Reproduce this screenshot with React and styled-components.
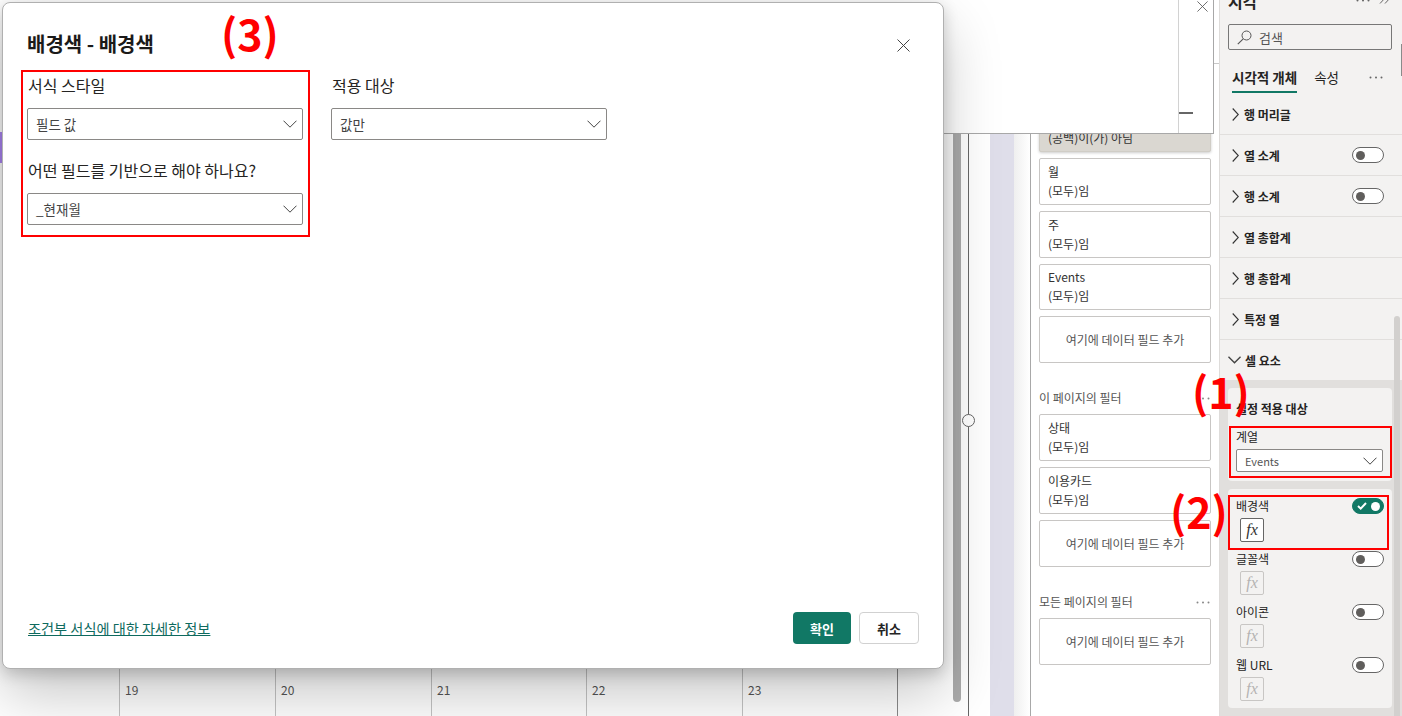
import React from "react";
import styled, { createGlobalStyle } from "styled-components";

const GlobalStyle = createGlobalStyle`
  html, body {
    margin: 0;
    padding: 0;
    background: #fff;
  }
  * {
    box-sizing: border-box;
  }
`;

const FONT = `"Noto Sans CJK KR", "Noto Sans", sans-serif`;

const calendarDays = [19, 20, 21, 22, 23];
const pageFilters = [
  { name: "상태", value: "(모두)임" },
  { name: "이용카드", value: "(모두)임" },
];
const closedRows = [
  { label: "행 머리글" },
  { label: "열 소계", toggle: true },
  { label: "행 소계", toggle: true },
  { label: "열 총합계" },
  { label: "행 총합계" },
  { label: "특정 열" },
];
const cellOptions = [
  { label: "배경색", on: true },
  { label: "글꼴색" },
  { label: "아이콘" },
  { label: "웹 URL" },
];

function ChevronDown({ size = 14, weight = 1 }) {
  return (
    <svg width={size} height={size / 2 + 1} viewBox="0 0 14 8" fill="none">
      <path d="M0.5 0.7 L7 7.2 L13.5 0.7" stroke="#444" strokeWidth={weight} />
    </svg>
  );
}

function ChevronRight() {
  return (
    <svg width="7" height="13" viewBox="0 0 7 13" fill="none">
      <path d="M0.7 0.5 L6.3 6.5 L0.7 12.5" stroke="#333" strokeWidth="1.1" />
    </svg>
  );
}

function Dots({ color = "#666" }) {
  return (
    <svg width="14" height="3" viewBox="0 0 14 3" fill={color}>
      <circle cx="1.5" cy="1.5" r="1" />
      <circle cx="7" cy="1.5" r="1" />
      <circle cx="12.5" cy="1.5" r="1" />
    </svg>
  );
}

function CloseIcon({ size = 13, color = "#444" }) {
  return (
    <svg width={size} height={size} viewBox="0 0 13 13" fill="none">
      <path d="M0.5 0.5 L12.5 12.5 M12.5 0.5 L0.5 12.5" stroke={color} strokeWidth="1" />
    </svg>
  );
}

function SearchIcon() {
  return (
    <svg width="15" height="15" viewBox="0 0 15 15" fill="none">
      <circle cx="9.5" cy="5.5" r="4.5" stroke="#555" strokeWidth="1" />
      <path d="M6.2 8.8 L0.8 14.2" stroke="#555" strokeWidth="1.1" />
    </svg>
  );
}

function Toggle({ on }) {
  return (
    <ToggleTrack $on={on}>
      {on && (
        <svg width="10" height="8" viewBox="0 0 10 8" fill="none">
          <path d="M1 4 L3.7 6.6 L9 1" stroke="#fff" strokeWidth="2" />
        </svg>
      )}
      <ToggleDot $on={on} />
    </ToggleTrack>
  );
}

function Select({ children }) {
  return (
    <DialogSelect>
      {children}
      <ChevronDown />
    </DialogSelect>
  );
}

export default function App() {
  return (
    <Page>
      <GlobalStyle />

      <Canvas>
        <Report>
          <PurpleMark />
          <CalendarRow>
            {calendarDays.map((day) => (
              <CalendarCell key={day}>{day}</CalendarCell>
            ))}
          </CalendarRow>
        </Report>
        <ScrollThumb />
        <SliderLine>
          <SliderKnob />
        </SliderLine>
        <LavenderBand />
        <FadeBand />
      </Canvas>

      <FilterPane>
        <FilterHeader />
        <ActiveCard>
          <span>일</span>
          <span>(공백)이(가) 아님</span>
        </ActiveCard>
        <FilterCard>
          <span>월</span>
          <span>(모두)임</span>
        </FilterCard>
        <FilterCard>
          <span>주</span>
          <span>(모두)임</span>
        </FilterCard>
        <FilterCard $short>
          <span>Events</span>
          <span>(모두)임</span>
        </FilterCard>
        <AddCard>여기에 데이터 필드 추가</AddCard>

        <FilterHeading>
          이 페이지의 필터
          <Dots color="#888" />
        </FilterHeading>
        {pageFilters.map((filter) => (
          <FilterCard key={filter.name}>
            <span>{filter.name}</span>
            <span>{filter.value}</span>
          </FilterCard>
        ))}
        <AddCard>여기에 데이터 필드 추가</AddCard>

        <FilterHeading>
          모든 페이지의 필터
          <Dots color="#888" />
        </FilterHeading>
        <AddCard>여기에 데이터 필드 추가</AddCard>
      </FilterPane>

      <FormatPane>
        <PaneHeader>
          <PaneTitle>시각</PaneTitle>
          <PaneHeaderTools>
            <Dots />
            <svg width="13" height="8" viewBox="0 0 13 8" fill="none">
              <path d="M1 7.5 L7 1 M6 7.5 L12 1" stroke="#666" strokeWidth="1" />
            </svg>
          </PaneHeaderTools>
        </PaneHeader>
        <SearchBox>
          <SearchIcon />
          검색
        </SearchBox>
        <Tabs>
          <Tab $active>시각적 개체</Tab>
          <Tab>속성</Tab>
          <TabDots>
            <Dots />
          </TabDots>
        </Tabs>
        {closedRows.map((row) => (
          <SectionRow key={row.label}>
            <ChevronRight />
            <SectionLabel>{row.label}</SectionLabel>
            {row.toggle && <Toggle />}
          </SectionRow>
        ))}
        <OpenSectionRow>
          <ChevronDown size={13} weight={1.5} />
          <SectionLabel>셀 요소</SectionLabel>
        </OpenSectionRow>
        <GrayArea>
          <ApplyCard>
            <ApplyTitle>설정 적용 대상</ApplyTitle>
            <ApplyLabel>계열</ApplyLabel>
            <PaneSelect>
              Events
              <ChevronDown />
            </PaneSelect>
          </ApplyCard>
          <OptionsCard>
            {cellOptions.map((option) => (
              <Option key={option.label}>
                <OptionHead>
                  <OptionLabel>{option.label}</OptionLabel>
                  <Toggle on={option.on} />
                </OptionHead>
                <FxBox $on={option.on}>fx</FxBox>
              </Option>
            ))}
          </OptionsCard>
        </GrayArea>
        <PaneScrollThumb />
        <EdgeThumb />
      </FormatPane>

      <Popup>
        <PopupDivider />
        <PopupClose>
          <CloseIcon size={11} color="#555" />
        </PopupClose>
        <PopupMinus />
      </Popup>

      <Dialog>
        <DialogHead>
          <DialogTitle>배경색 - 배경색</DialogTitle>
          <DialogClose>
            <CloseIcon />
          </DialogClose>
        </DialogHead>
        <DialogForm>
          <FormColumn>
            <FieldLabel>서식 스타일</FieldLabel>
            <Select>필드 값</Select>
            <FieldLabel $second>어떤 필드를 기반으로 해야 하나요?</FieldLabel>
            <Select>_현재월</Select>
          </FormColumn>
          <FormColumn>
            <FieldLabel>적용 대상</FieldLabel>
            <Select>값만</Select>
          </FormColumn>
        </DialogForm>
        <DialogFoot>
          <HelpLink>조건부 서식에 대한 자세한 정보</HelpLink>
          <FootButtons>
            <PrimaryButton>확인</PrimaryButton>
            <SecondaryButton>취소</SecondaryButton>
          </FootButtons>
        </DialogFoot>
      </Dialog>

      <RedBox $x={21} $y={70} $w={289} $h={167} />
      <RedBox $x={1229} $y={426} $w={163} $h={52} />
      <RedBox $x={1228} $y={495} $w={161} $h={55} />
      <RedNumber $x={221} $y={7}>(3)</RedNumber>
      <RedNumber $x={1192} $y={365}>(1)</RedNumber>
      <RedNumber $x={1170} $y={485}>(2)</RedNumber>
    </Page>
  );
}

const Page = styled.div`
  position: relative;
  display: flex;
  width: 1402px;
  height: 716px;
  overflow: hidden;
  background: #fff;
  font-family: ${FONT};
  color: #252423;
`;

const Canvas = styled.div`
  display: flex;
  flex: 0 0 1030px;
`;

const Report = styled.div`
  display: flex;
  flex: 0 0 898px;
  flex-direction: column;
  justify-content: space-between;
  border-right: 1px solid #8a8a8a;
`;

const PurpleMark = styled.div`
  width: 3px;
  height: 31px;
  margin-top: 132px;
  background: #ab84f2;
`;

const CalendarRow = styled.div`
  display: grid;
  grid-template-columns: 156px 156px 155px 156px 155px;
  height: 48px;
  padding-left: 119px;
`;

const CalendarCell = styled.div`
  padding: 14px 0 0 5px;
  border-left: 1px solid #c4c4c4;
  font-size: 12px;
  line-height: 16px;
  color: #555;
`;

const ScrollThumb = styled.div`
  flex: 0 0 8px;
  margin: 0 0 14px 55px;
  border-radius: 0 0 4px 4px;
  background: #ababab;
`;

const SliderLine = styled.div`
  position: relative;
  flex: 0 0 1px;
  margin-left: 7px;
  background: #666;
`;

const SliderKnob = styled.div`
  position: absolute;
  top: 414px;
  left: -6px;
  width: 13px;
  height: 13px;
  border: 1px solid #666;
  border-radius: 50%;
  background: #fff;
`;

const LavenderBand = styled.div`
  flex: 0 0 24px;
  margin-left: 21px;
  background: #dfdeea;
`;

const FadeBand = styled.div`
  flex: 0 0 16px;
  background: linear-gradient(90deg, #efefef, #fff);
`;

const FilterPane = styled.div`
  display: flex;
  flex: 0 0 189px;
  flex-direction: column;
  align-items: flex-start;
  gap: 6px;
  padding-left: 8px;
  border-left: 1px solid #a8a8a8;
`;

const FilterHeader = styled.div`
  width: 189px;
  height: 64px;
  margin: 0 0 35px -9px;
  border-bottom: 1px solid #c8c8c8;
`;

const FilterCard = styled.div`
  display: flex;
  flex-direction: column;
  justify-content: center;
  flex: 0 0 auto;
  width: 172px;
  height: ${(p) => (p.$short ? "46px" : "47px")};
  padding: 0 0 2px 8px;
  border: 1px solid #c8c6c4;
  border-radius: 2px;
  background: #fff;
  font-size: 12px;
  line-height: 19px;
  color: #333;
`;

const ActiveCard = styled(FilterCard)`
  border-color: #d0cdc6;
  background: #dad7d1;
  box-shadow: 0 1px 3px rgba(0, 0, 0, 0.2);
`;

const AddCard = styled.div`
  display: flex;
  align-items: center;
  justify-content: center;
  flex: 0 0 47px;
  width: 172px;
  border: 1px solid #c8c6c4;
  border-radius: 2px;
  font-size: 12px;
  color: #555;
`;

const FilterHeading = styled.div`
  display: flex;
  align-items: center;
  justify-content: space-between;
  width: 172px;
  height: 18px;
  margin: 20px 0 1px;
  padding-right: 1px;
  font-size: 12px;
  line-height: 18px;
  color: #555;
`;

const FormatPane = styled.div`
  position: relative;
  display: flex;
  flex: 0 0 183px;
  flex-direction: column;
  border-left: 1px solid #dedcda;
  background: #f3f2f1;
`;

const PaneHeader = styled.div`
  display: flex;
  align-items: center;
  justify-content: space-between;
  height: 24px;
  padding: 0 10px 0 8px;
  overflow: hidden;
`;

const PaneTitle = styled.div`
  margin-top: -22px;
  font-size: 16px;
  font-weight: 700;
  line-height: 20px;
`;

const PaneHeaderTools = styled.div`
  display: flex;
  align-items: center;
  gap: 9px;
  margin-top: -24px;
`;

const SearchBox = styled.div`
  display: flex;
  align-items: center;
  gap: 7px;
  height: 26px;
  margin: 0 10px 0 8px;
  padding-left: 8px;
  border: 1px solid #777;
  border-radius: 2px;
  font-size: 13px;
  color: #555;
`;

const Tabs = styled.div`
  display: flex;
  height: 26px;
  margin: 17px 0 1px;
  padding-left: 12px;
`;

const Tab = styled.div`
  height: 26px;
  margin-right: 17px;
  border-bottom: 2px solid ${(p) => (p.$active ? "#117865" : "transparent")};
  font-size: 13.5px;
  font-weight: ${(p) => (p.$active ? 700 : 400)};
  line-height: 20px;
  color: #252423;
`;

const TabDots = styled.div`
  display: flex;
  align-items: center;
  height: 20px;
  margin-left: 13px;
`;

const SectionRow = styled.div`
  display: flex;
  flex: 0 0 41px;
  align-items: center;
  gap: 5px;
  padding: 0 18px 0 12px;
  border-bottom: 1px solid #e1dfdd;
`;

const OpenSectionRow = styled(SectionRow)`
  flex-basis: 40px;
  gap: 4px;
  padding-left: 8px;
  border-bottom: none;
`;

const SectionLabel = styled.div`
  flex: 1;
  font-size: 12px;
  font-weight: 700;
  color: #252423;
`;

const ToggleTrack = styled.div`
  display: flex;
  align-items: center;
  justify-content: ${(p) => (p.$on ? "space-between" : "flex-start")};
  width: 32px;
  height: 16px;
  padding: 0 3px 0 ${(p) => (p.$on ? "4px" : "3px")};
  border: 1px solid ${(p) => (p.$on ? "#117865" : "#666")};
  border-radius: 8px;
  background: ${(p) => (p.$on ? "#117865" : "#fff")};
`;

const ToggleDot = styled.div`
  width: 9px;
  height: 9px;
  border-radius: 50%;
  background: ${(p) => (p.$on ? "#fff" : "#605e5c")};
`;

const GrayArea = styled.div`
  display: flex;
  flex: 1;
  flex-direction: column;
  gap: 8px;
  padding: 8px 10px 8px 8px;
  background: #e1dfdd;
`;

const ApplyCard = styled.div`
  padding: 12px 9px 9px 8px;
  border-radius: 4px;
  background: #f3f2f1;
`;

const ApplyTitle = styled.div`
  font-size: 12px;
  font-weight: 700;
  line-height: 18px;
`;

const ApplyLabel = styled.div`
  margin-top: 10px;
  font-size: 12px;
  line-height: 18px;
`;

const PaneSelect = styled.div`
  display: flex;
  align-items: center;
  justify-content: space-between;
  height: 23px;
  margin-top: 3px;
  padding: 0 5px 0 8px;
  border: 1px solid #8a8886;
  border-radius: 2px;
  background: #fff;
  font-size: 11px;
  color: #555;
`;

const OptionsCard = styled.div`
  display: flex;
  flex-direction: column;
  gap: 9px;
  height: 219px;
  padding: 9px 8px 0;
  border-radius: 4px;
  background: #f3f2f1;
`;

const Option = styled.div`
  display: flex;
  flex-direction: column;
  gap: 4px;
`;

const OptionHead = styled.div`
  display: flex;
  align-items: center;
  justify-content: space-between;
  height: 16px;
`;

const OptionLabel = styled.span`
  margin-top: -2px;
  font-size: 12px;
  color: #252423;
`;

const FxBox = styled.div`
  display: flex;
  align-items: center;
  justify-content: center;
  width: 24px;
  height: 24px;
  margin-left: 4px;
  border: 1px solid ${(p) => (p.$on ? "#666" : "#c8c6c4")};
  border-radius: 2px;
  background: ${(p) => (p.$on ? "#fff" : "transparent")};
  font-family: "Liberation Serif", serif;
  font-size: 16px;
  font-style: italic;
  color: ${(p) => (p.$on ? "#333" : "#b5b3b1")};
`;

const PaneScrollThumb = styled.div`
  position: absolute;
  top: 316px;
  right: 2px;
  bottom: 0;
  width: 6px;
  border-radius: 3px 3px 0 0;
  background: #d2d0ce;
`;

const EdgeThumb = styled.div`
  position: absolute;
  top: 44px;
  right: 0;
  width: 1px;
  height: 32px;
  background: #8a8a8a;
`;

const Popup = styled.div`
  position: absolute;
  top: 0;
  left: 800px;
  z-index: 1;
  width: 414px;
  height: 134px;
  border-right: 1px solid #a8a8a8;
  border-bottom: 1px solid #a8a8a8;
  background: #fff;
`;

const PopupDivider = styled.div`
  position: absolute;
  top: 0;
  right: 34px;
  bottom: 0;
  width: 1px;
  background: #d2d2d2;
`;

const PopupClose = styled.div`
  position: absolute;
  top: -7px;
  right: 5px;
`;

const PopupMinus = styled.div`
  position: absolute;
  top: 112px;
  right: 20px;
  width: 14px;
  height: 2px;
  background: #666;
`;

const Dialog = styled.div`
  position: absolute;
  top: 2px;
  left: 2px;
  z-index: 2;
  display: flex;
  flex-direction: column;
  width: 942px;
  height: 667px;
  padding: 0 24px;
  border: 1px solid #b0b0b0;
  border-radius: 8px;
  background: #fff;
  box-shadow: 0 25.6px 57.6px rgba(0, 0, 0, 0.22), 0 4.8px 14.4px rgba(0, 0, 0, 0.18);
`;

const DialogHead = styled.div`
  display: flex;
  align-items: center;
  justify-content: space-between;
  height: 60px;
  margin-top: 10px;
  padding-right: 9px;
`;

const DialogClose = styled.div`
  display: flex;
  margin-top: 4px;
`;

const DialogTitle = styled.div`
  font-size: 20px;
  font-weight: 700;
  color: #1b1a19;
`;

const DialogForm = styled.div`
  display: flex;
  flex: 1;
  gap: 28px;
`;

const FormColumn = styled.div`
  width: 276px;
`;

const FieldLabel = styled.div`
  height: 24px;
  margin: ${(p) => (p.$second ? "19px" : "1px")} 0 10px 1px;
  font-size: 16px;
  line-height: 22px;
  color: #252423;
`;

const DialogSelect = styled.div`
  display: flex;
  align-items: center;
  justify-content: space-between;
  height: 32px;
  padding: 0 5px 0 8px;
  border: 1px solid #8a8886;
  border-radius: 2px;
  font-size: 13.5px;
  color: #444;
`;

const DialogFoot = styled.div`
  display: flex;
  align-items: center;
  justify-content: space-between;
  height: 32px;
  margin-bottom: 24px;
`;

const HelpLink = styled.a`
  margin-left: 1px;
  font-size: 14.2px;
  color: #0e6a5e;
  text-decoration: underline;
`;

const FootButtons = styled.div`
  display: flex;
  gap: 8px;
`;

const PrimaryButton = styled.div`
  display: flex;
  align-items: center;
  justify-content: center;
  width: 58px;
  height: 32px;
  border-radius: 4px;
  background: #117865;
  font-size: 13px;
  font-weight: 700;
  color: #fff;
`;

const SecondaryButton = styled(PrimaryButton)`
  width: 60px;
  border: 1px solid #d1d1d1;
  background: #fff;
  color: #252423;
`;

const RedBox = styled.div`
  position: absolute;
  top: ${(p) => p.$y}px;
  left: ${(p) => p.$x}px;
  z-index: 3;
  width: ${(p) => p.$w}px;
  height: ${(p) => p.$h}px;
  border: 2px solid #f00;
`;

const RedNumber = styled.div`
  position: absolute;
  top: ${(p) => p.$y}px;
  left: ${(p) => p.$x}px;
  z-index: 3;
  font-family: ${FONT};
  font-size: 43px;
  font-weight: 700;
  line-height: 50px;
  color: #f00;
`;
